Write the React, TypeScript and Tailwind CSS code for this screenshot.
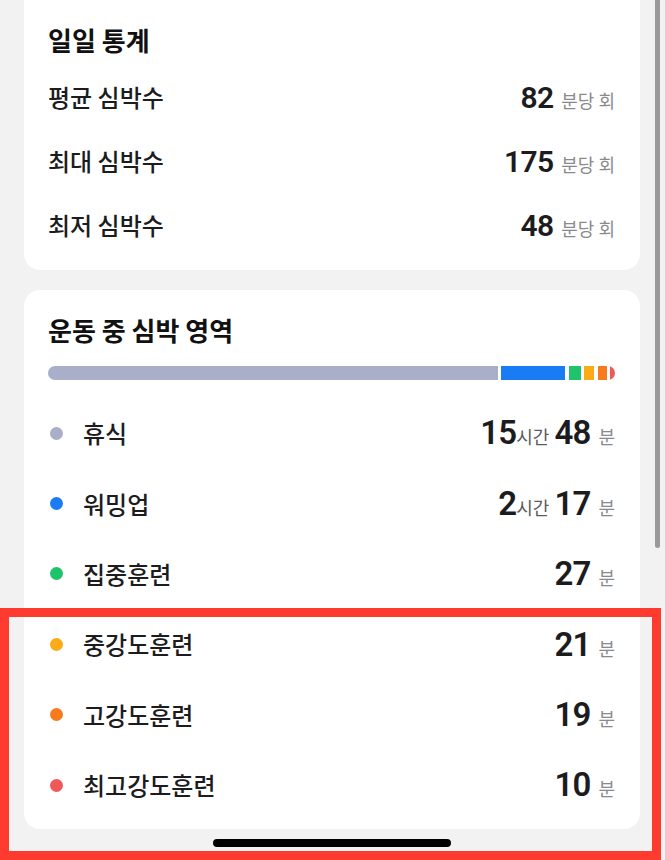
import React from 'react';

const KR = { fontFamily: '"Noto Sans CJK KR", "Noto Sans", sans-serif' };
const NUM = { fontFamily: 'Roboto, "Noto Sans CJK KR", sans-serif' };

const daily = [
  { label: '평균 심박수', value: '82' },
  { label: '최대 심박수', value: '175' },
  { label: '최저 심박수', value: '48' },
];

const zones = [
  { label: '휴식', dot: 'bg-[#a9afc8]', hours: '15', mins: '48' },
  { label: '워밍업', dot: 'bg-[#1a7cf5]', hours: '2', mins: '17' },
  { label: '집중훈련', dot: 'bg-[#1fc36b]', mins: '27' },
  { label: '중강도훈련', dot: 'bg-[#fbab18]', mins: '21' },
  { label: '고강도훈련', dot: 'bg-[#f77a1d]', mins: '19' },
  { label: '최고강도훈련', dot: 'bg-[#f0595a]', mins: '10' },
];

export default function App() {
  return (
    <div className="relative w-[665px] h-[860px] overflow-hidden bg-[#f2f2f2]" style={KR}>
      {/* 일일 통계 */}
      <div className="ml-6 w-[616px] bg-white rounded-b-2xl pt-[24px] pb-[13px] px-6">
        <h2 className="text-[26px] leading-[32px] font-bold text-[#111]">일일 통계</h2>
        <div className="mt-[9px]">
          {daily.map((d) => (
            <div key={d.label} className="h-16 flex items-center justify-between pr-px">
              <span className="text-[24px] font-medium text-[#1c1c1e]">{d.label}</span>
              <span className="flex items-baseline">
                <span className="text-[30px] font-semibold text-[#1c1c1e] tracking-tight" style={NUM}>{d.value}</span>
                <span className="ml-[8px] text-[18px] text-[#8a8a8e]">분당 회</span>
              </span>
            </div>
          ))}
        </div>
      </div>

      {/* 운동 중 심박 영역 */}
      <div className="ml-6 mt-5 w-[616px] bg-white rounded-2xl pt-[24px] pb-[9px] pl-6 pr-[25px]">
        <h2 className="text-[26px] leading-[32px] font-bold text-[#111]">운동 중 심박 영역</h2>
        <div className="mt-[20px] flex h-[14px] gap-[3.5px] rounded-full overflow-hidden">
          <div className="w-[451px] bg-[#a9afc8]" />
          <div className="w-[64px] bg-[#1a7cf5]" />
          <div className="w-[12px] bg-[#1fc36b]" />
          <div className="w-[10px] bg-[#fbab18]" />
          <div className="w-[9px] bg-[#f77a1d]" />
          <div className="w-[5px] bg-[#f0595a]" />
        </div>
        <div className="mt-[18px]">
          {zones.map((z) => (
            <div key={z.label} className="h-[70.4px] flex items-center justify-between">
              <div className="flex items-center">
                <span className={`ml-[2px] w-[13px] h-[13px] rounded-full ${z.dot}`} />
                <span className="ml-[20px] text-[24px] font-medium text-[#1c1c1e]">{z.label}</span>
              </div>
              <span className="flex items-baseline text-[#1c1c1e]">
                {z.hours && (
                  <>
                    <span className="text-[33px] font-semibold tracking-tight" style={NUM}>{z.hours}</span>
                    <span className="text-[18px] text-[#5c5c60] mr-[5px]">시간</span>
                  </>
                )}
                <span className="text-[33px] font-semibold tracking-tight" style={NUM}>{z.mins}</span>
                <span className="ml-[8px] text-[18px] text-[#8a8a8e]">분</span>
              </span>
            </div>
          ))}
        </div>
      </div>

      {/* scroll indicator */}
      <div className="absolute left-[655px] -top-2 w-[5px] h-[556px] rounded-full bg-[#9a9a9a]" />

      {/* home indicator */}
      <div className="absolute left-[213px] top-[839px] w-[238px] h-[8px] rounded-full bg-black" />

      {/* highlight annotation */}
      <div className="absolute left-0 top-[608px] w-[661px] h-[252px] border-[9px] border-[#ff3b30]" />
    </div>
  );
}
